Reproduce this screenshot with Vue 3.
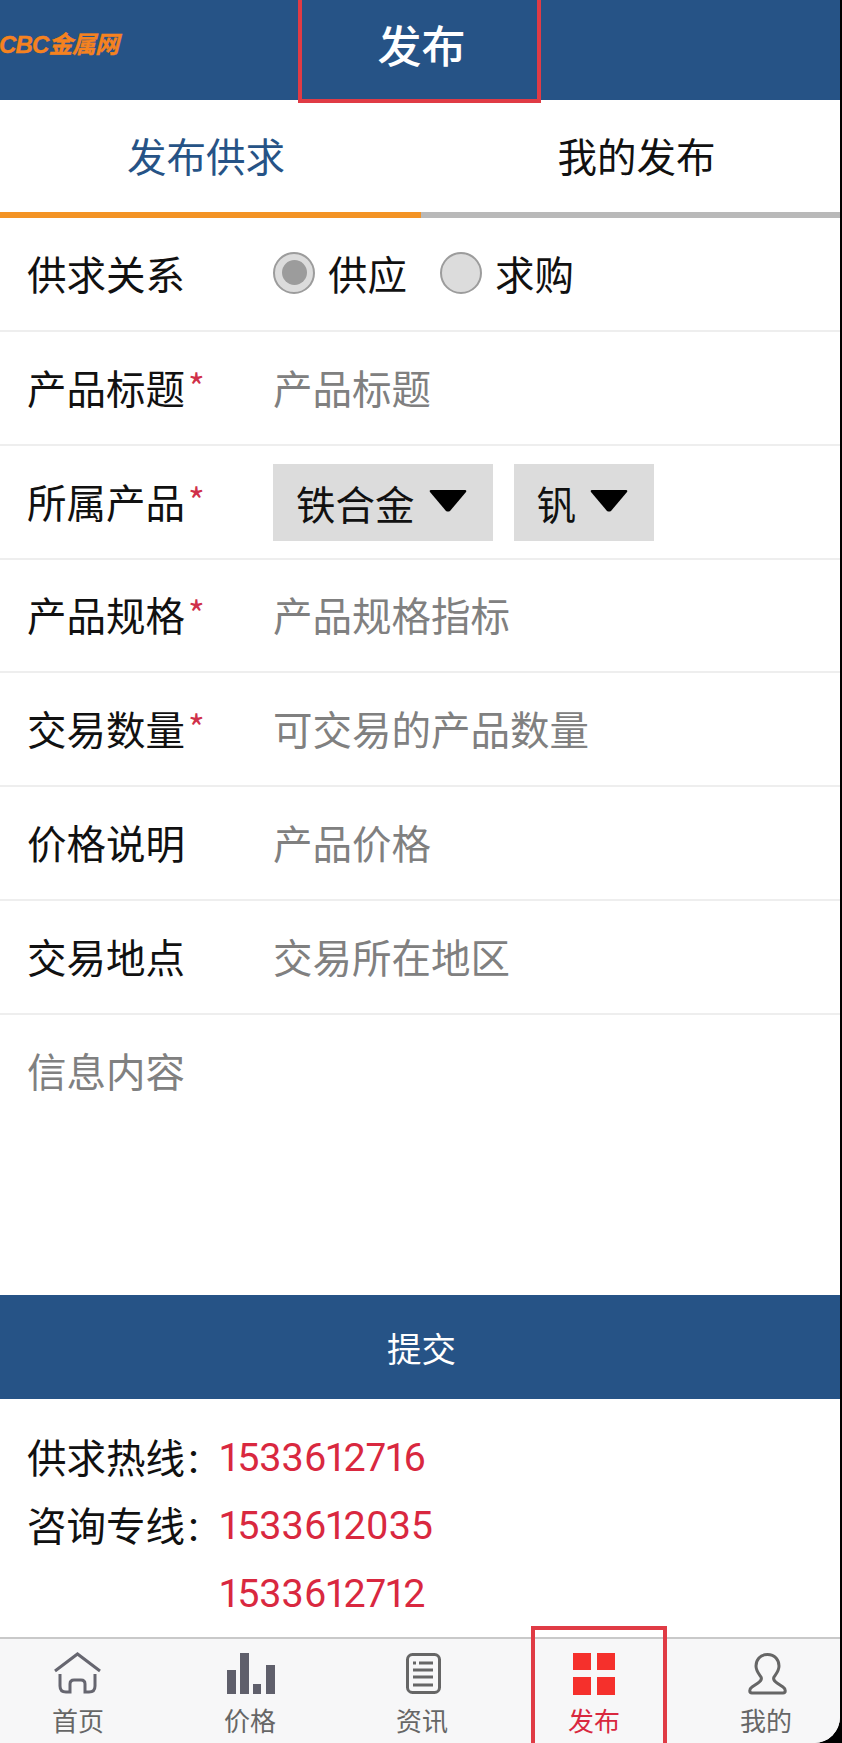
<script setup>
const rows = [
  { label: '产品标题', required: true, placeholder: '产品标题' },
  { label: '所属产品', required: true, selects: ['铁合金', '钒'] },
  { label: '产品规格', required: true, placeholder: '产品规格指标' },
  { label: '交易数量', required: true, placeholder: '可交易的产品数量' },
  { label: '价格说明', placeholder: '产品价格' },
  { label: '交易地点', placeholder: '交易所在地区' }
]
const contacts = [
  { label: '供求热线', phone: '1533612716' },
  { label: '咨询专线', phone: '1533612035' },
  { label: '', phone: '1533612712' }
]
const navs = [
  { id: 'home', label: '首页' },
  { id: 'price', label: '价格' },
  { id: 'news', label: '资讯' },
  { id: 'post', label: '发布', active: true },
  { id: 'me', label: '我的' }
]
</script>

<template>
  <div class="phone">
    <div class="screen">
      <header class="header">
        <span class="logo">CBC金属网</span>
        <h1 class="title">发布</h1>
        <span class="frame frame-top"></span>
      </header>

      <div class="tabs">
        <div class="tab tab-active">发布供求</div>
        <div class="tab tab-other">我的发布</div>
      </div>

      <form class="form" @submit.prevent>
        <div class="row">
          <span class="label">供求关系</span>
          <div class="radios">
            <span class="radio radio-on"></span><span class="radio-text">供应</span>
            <span class="radio"></span><span class="radio-text">求购</span>
          </div>
        </div>
        <div v-for="r in rows" :key="r.label" class="row">
          <span class="label">{{ r.label }}<i v-if="r.required" class="star">*</i></span>
          <div v-if="r.selects" class="selects">
            <div v-for="s in r.selects" :key="s" class="select">
              <span>{{ s }}</span>
              <svg class="caret" width="38" height="22" viewBox="0 0 38 22">
                <path d="M2 0H36Q38 0 37 2L21 21Q19 22 17 21L1 2Q0 0 2 0Z" fill="#000" />
              </svg>
            </div>
          </div>
          <input v-else class="input" type="text" :placeholder="r.placeholder" />
        </div>
        <textarea class="area" placeholder="信息内容"></textarea>
        <button class="submit" type="submit">提交</button>
      </form>

      <div class="contacts">
        <div v-for="c in contacts" :key="c.phone" class="contact">
          <span class="contact-label">{{ c.label }}<span v-if="c.label" class="colon">：</span></span>
          <span class="phone-no">{{ c.phone }}</span>
        </div>
      </div>

      <nav class="nav">
        <div v-for="n in navs" :key="n.id" class="nav-item" :class="{ 'nav-active': n.active }">
          <svg class="nav-icon" width="50" height="44" viewBox="0 0 50 44" fill="none">
            <g v-if="n.id === 'home'" stroke="#666670" stroke-width="3">
              <path d="M2 19L24.5 2L47 19" />
              <path d="M7 22V34Q7 40 13 40H17V32Q17 28 21 28H28Q32 28 32 32V40H36Q42 40 42 34V22" />
            </g>
            <g v-else-if="n.id === 'price'" fill="#5f5f6b">
              <rect x="2" y="18" width="9" height="24" />
              <rect x="15" y="1" width="9" height="41" />
              <rect x="28" y="32" width="8" height="10" />
              <rect x="41" y="13" width="9" height="29" />
            </g>
            <g v-else-if="n.id === 'news'" stroke="#666" stroke-width="3">
              <rect x="10.5" y="2.5" width="32" height="38" rx="5" />
              <path d="M16 11H19M22 11H36M16 18H36M16 25H36M16 33H36" />
            </g>
            <g v-else-if="n.id === 'post'" fill="#f5302c">
              <rect x="4" y="1" width="18" height="17" />
              <rect x="28" y="1" width="18" height="17" />
              <rect x="4" y="25" width="18" height="18" />
              <rect x="28" y="25" width="18" height="18" />
            </g>
            <path
              v-else
              d="M26.500 2.500C19 2.500 15 8 15 14C15 19 18 22 20 25C21 27 20 29 17 31L11 35C8 37 8 41 11 41H42C45 41 45 37 42 35L36 31C33 29 32 27 33 25C35 22 38 19 38 14C38 8 34 2.500 26.500 2.500Z"
              stroke="#666"
              stroke-width="3"
            />
          </svg>
          <span class="nav-label">{{ n.label }}</span>
          <span v-if="n.active" class="frame frame-nav"></span>
        </div>
      </nav>
    </div>
  </div>
</template>

<style>
html, body { margin: 0; padding: 0; background: #000; }
</style>

<style scoped>
.phone {
  width: 842px;
  height: 1743px;
  background: #000;
  font-family: "Noto Sans CJK SC", "Liberation Sans", sans-serif;
  overflow: hidden;
}
.screen {
  width: 840px;
  height: 1743px;
  background: #fff;
  border-bottom-right-radius: 26px;
  overflow: hidden;
  display: flex;
  flex-direction: column;
}
.header {
  position: relative;
  height: 100px;
  flex: none;
  background: #265386;
  display: flex;
  align-items: center;
  justify-content: center;
}
.logo {
  position: absolute;
  left: -1px;
  top: 28px;
  font: italic 700 24px/34px "Liberation Sans", "Noto Sans CJK SC", sans-serif;
  letter-spacing: -0.8px;
  color: #f58220;
  -webkit-text-stroke: 0.4px #f58220;
}
.title {
  margin: 0 0 12px 3px;
  font-size: 44px;
  font-weight: 500;
  line-height: 88px;
  color: #fff;
}
.frame {
  position: absolute;
  border: 4px solid #e03b45;
  box-sizing: border-box;
  pointer-events: none;
}
.frame-top {
  left: 298px;
  width: 243px;
  top: -8px;
  height: 111px;
}
.tabs {
  display: flex;
  height: 118px;
  flex: none;
}
.tab {
  box-sizing: border-box;
  border-bottom: 6px solid #b9b9b9;
  font-size: 39.5px;
  line-height: 110px;
  text-align: center;
  color: #111;
}
.tab-active {
  flex: 0 0 421px;
  color: #265386;
  border-bottom-color: #f39325;
  padding-right: 9px;
}
.tab-other {
  flex: 1;
  padding-left: 12px;
}
.form {
  display: flex;
  flex-direction: column;
  flex: none;
}
.row {
  height: 113.85px;
  box-sizing: border-box;
  border-bottom: 2px solid #eee;
  display: flex;
  align-items: center;
  padding: 0 0 2px 27px;
}
.label {
  position: relative;
  width: 246px;
  flex: none;
  font-size: 39.5px;
  color: #111;
  line-height: 56px;
}
.star {
  position: absolute;
  left: 161px;
  top: -2px;
  font-style: normal;
  font-size: 36px;
  color: #d0304a;
}
.radios {
  display: flex;
  align-items: center;
}
.radio {
  width: 42px;
  height: 42px;
  box-sizing: border-box;
  border-radius: 50%;
  border: 2.5px solid #9c9c9c;
  background: #dcdcdc;
  display: flex;
  align-items: center;
  justify-content: center;
}
.radio-on::after {
  content: "";
  width: 25px;
  height: 25px;
  border-radius: 50%;
  background: #9c9c9c;
}
.radio-text {
  margin: 0 33px 0 13px;
  font-size: 39.5px;
  color: #111;
  line-height: 56px;
}
.radio-text:last-child { margin-right: 0; }
.input {
  flex: 1;
  min-width: 0;
  border: 0;
  outline: 0;
  padding: 0;
  background: transparent;
  font: 39.5px/56px "Noto Sans CJK SC", sans-serif;
  color: #111;
}
.input::placeholder, .area::placeholder {
  color: #808080;
  opacity: 1;
}
.selects {
  display: flex;
  gap: 21px;
  margin-top: 3px;
}
.select {
  height: 77px;
  background: #dcdcdc;
  display: flex;
  align-items: center;
  gap: 14px;
  padding: 0 26px 0 23px;
  font-size: 39.5px;
  color: #111;
}
.caret { margin-top: -3px; }
.area {
  display: block;
  height: 280px;
  box-sizing: border-box;
  border: 0;
  outline: 0;
  resize: none;
  padding: 27px 27px 0;
  width: 100%;
  font: 39.5px/56px "Noto Sans CJK SC", sans-serif;
  color: #111;
}
.submit {
  display: block;
  width: 100%;
  height: 104px;
  border: 0;
  padding: 0 0 0 3px;
  background: #265386;
  color: #fff;
  font: 34.5px "Noto Sans CJK SC", sans-serif;
}
.contacts {
  flex: 1;
  padding-top: 25px;
  box-sizing: border-box;
  min-height: 0;
}
.contact {
  display: flex;
  align-items: center;
  height: 68px;
  padding-left: 27px;
}
.contact-label {
  width: 193px;
  flex: none;
  margin-top: -4px;
  font-size: 39.5px;
  color: #111;
  white-space: nowrap;
}
.colon { font-size: 34px; }
.phone-no {
  font: 39.5px "Roboto", sans-serif;
  font-variant-numeric: proportional-nums;
  color: #d9283f;
}
.nav {
  height: 106px;
  flex: none;
  box-sizing: border-box;
  border-top: 2px solid #c9c9c9;
  background: #f7f7f8;
  display: grid;
  grid-template-columns: repeat(5, 156px);
  column-gap: 16px;
}
.nav-item {
  position: relative;
  display: flex;
  flex-direction: column;
  align-items: center;
  padding-top: 13px;
  color: #666;
}
.nav-icon { display: block; flex: none; }
.nav-label {
  margin-top: 9px;
  font-size: 26px;
  line-height: 30px;
}
.nav-active { color: #d9283f; }
.frame-nav {
  left: 15px;
  top: -13px;
  width: 136px;
  height: 130px;
}
</style>
